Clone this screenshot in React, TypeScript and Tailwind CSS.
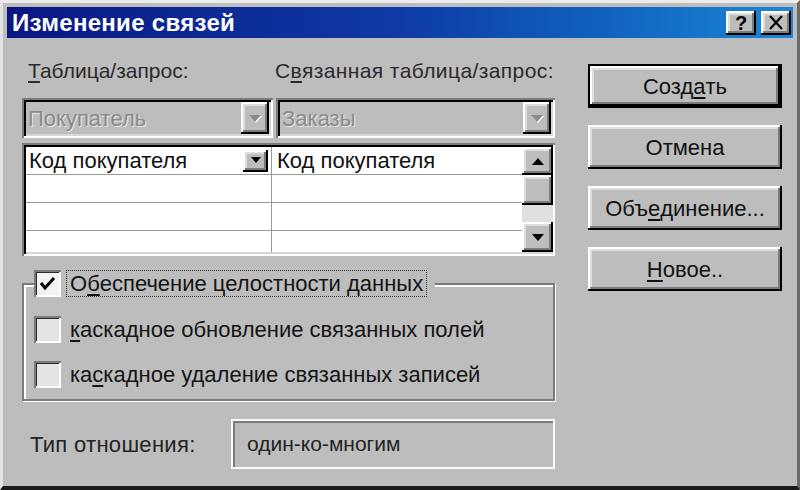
import React from "react";

const raised =
  "shadow-[inset_-2px_-2px_0_#000,inset_2px_2px_0_#fff,inset_-4px_-4px_0_#7b7b7b,inset_4px_4px_0_#dedede]";
const sunken =
  "shadow-[inset_2px_2px_0_#7b7b7b,inset_-2px_-2px_0_#fff,inset_4px_4px_0_#000,inset_-4px_-4px_0_#d6d6d6]";

function U({ children }: { children: React.ReactNode }) {
  return <span className="underline underline-offset-[3px] decoration-[1.5px]">{children}</span>;
}

function Arrow({ dir, disabled }: { dir: "up" | "down"; disabled?: boolean }) {
  const pts = dir === "up" ? "1,9 7,2 13,9" : "1,2 13,2 7,9";
  return (
    <svg width="14" height="11" viewBox="0 0 14 11">
      {disabled && (
        <polygon points={dir === "up" ? "2,10 8,3 14,10" : "2,3 14,3 8,10"} fill="#fff" />
      )}
      <polygon points={pts} fill={disabled ? "#8c8c8c" : "#000"} />
    </svg>
  );
}

function Combo({ text, width }: { text: string; width: string }) {
  return (
    <div className={`${width} h-[40px] bg-[#bdbdbd] ${sunken} flex items-center pl-[6px] pr-[4px]`}>
      <span className="flex-1 text-[22px] text-[#8a8a8a] [text-shadow:1px_1px_0_#e8e8e8]">
        {text}
      </span>
      <div className={`w-[28px] h-[32px] bg-[#bdbdbd] ${raised} flex items-center justify-center`}>
        <Arrow dir="down" disabled />
      </div>
    </div>
  );
}

function CheckBox({ checked }: { checked?: boolean }) {
  return (
    <div
      className={`w-[27px] h-[27px] ${checked ? "bg-[#f2f2f2]" : "bg-[#e4e4e4]"} shadow-[inset_2px_2px_0_#7b7b7b,inset_-2px_-2px_0_#fff,inset_3px_3px_0_#2a2a2a] flex items-center justify-center`}
    >
      {checked && (
        <svg width="17" height="15" viewBox="0 0 17 15">
          <polyline points="2,7 6,12 15,2" fill="none" stroke="#000" strokeWidth="3" />
        </svg>
      )}
    </div>
  );
}

function Btn({ children, def }: { children: React.ReactNode; def?: boolean }) {
  return (
    <div
      className={`w-[194px] h-[44px] bg-[#bdbdbd] flex items-center justify-center text-[22px] text-[#111] ${
        def ? "border-2 border-black" : ""
      } ${raised}`}
    >
      {children}
    </div>
  );
}

export default function App() {
  return (
    <div className="w-[800px] h-[490px] bg-[#bdbdbd] border-t-[3px] border-l-[3px] border-t-[#ececec] border-l-[#e2e2e2] border-r-[3px] border-r-[#6a6a6a] border-b-[4px] border-b-[#1a1a1a] p-[4px] font-['Liberation_Sans',Arial,sans-serif] text-[#141414] overflow-hidden">
      {/* title bar */}
      <div className="h-[31px] bg-gradient-to-r from-[#0b1682] via-[#0f3aa6] to-[#1d86d4] flex items-center justify-between pl-[5px] pr-[2px]">
        <span className="text-white font-bold text-[24px] tracking-[0.3px]">Изменение связей</span>
        <div className="flex gap-[5px]">
          <div className={`w-[30px] h-[24px] bg-[#bdbdbd] ${raised} flex items-center justify-center text-[20px] font-bold text-black leading-none`}>
            ?
          </div>
          <div className={`w-[30px] h-[24px] bg-[#bdbdbd] ${raised} flex items-center justify-center`}>
            <svg width="16" height="15" viewBox="0 0 16 15">
              <path d="M2 1 L14 14 M14 1 L2 14" stroke="#000" strokeWidth="2.2" />
            </svg>
          </div>
        </div>
      </div>

      <div className="flex pl-[15px]">
        {/* left column */}
        <div className="w-[533px] flex flex-col">
          <div className="mt-[21px] h-[24px] flex items-center text-[21px] text-[#2a2a2a]">
            <span className="w-[253px] pl-[6px]">
              <U>Т</U>аблица/запрос:
            </span>
            <span className="tracking-[0.4px]">
              С<U>в</U>язанная таблица/запрос:
            </span>
          </div>

          <div className="mt-[15px] flex gap-[3px]">
            <Combo text="Покупатель" width="w-[251px]" />
            <Combo text="Заказы" width="w-[279px]" />
          </div>

          <div className={`mt-[5px] h-[113px] bg-white ${sunken} p-[4px] pr-[2px] flex`}>
            <div className="flex-1 flex flex-col">
              {[0, 1, 2, 3].map((i) => (
                <div
                  key={i}
                  className={`flex ${i < 3 ? "h-[28px] border-b border-[#9a9a9a]" : "flex-1"}`}
                >
                  <div className="w-[246px] border-r border-[#9a9a9a] flex items-center pl-[3px] pr-[3px]">
                    {i === 0 && (
                      <>
                        <span className="flex-1 text-[22px] text-[#111]">Код покупателя</span>
                        <div className={`w-[25px] h-[22px] bg-[#bdbdbd] ${raised} flex items-center justify-center`}>
                          <svg width="10" height="7" viewBox="0 0 10 7">
                            <polygon points="0,0 10,0 5,6" fill="#000" />
                          </svg>
                        </div>
                      </>
                    )}
                  </div>
                  <div className="flex-1 flex items-center pl-[5px]">
                    {i === 0 && <span className="text-[22px] text-[#111]">Код покупателя</span>}
                  </div>
                </div>
              ))}
            </div>
            <div className="w-[31px] flex flex-col">
              <div className={`h-[28px] bg-[#bdbdbd] ${raised} flex items-center justify-center`}>
                <Arrow dir="up" />
              </div>
              <div className={`h-[30px] bg-[#bdbdbd] ${raised}`} />
              <div className="flex-1 bg-[#e0e0e0]" />
              <div className={`h-[30px] bg-[#bdbdbd] ${raised} flex items-center justify-center`}>
                <Arrow dir="down" />
              </div>
            </div>
          </div>

          <fieldset className="mt-[14px] h-[131px] border-2 border-[#7b7b7b] shadow-[inset_2px_2px_0_#fff,1px_1px_0_#fff]">
            <legend className="ml-[10px] pr-[8px] bg-[#bdbdbd] flex items-center h-[27px]">
              <CheckBox checked />
              <span className="ml-[5px] px-[3px] h-[27px] flex items-center border border-dotted border-[#333] text-[22px]">
                О<U>б</U>еспечение целостности данных
              </span>
            </legend>
            <div className="flex flex-col pl-[10px] pt-[19px] gap-[18px]">
              <div className="flex items-center h-[27px]">
                <CheckBox />
                <span className="ml-[9px] text-[22px]">
                  <U>к</U>аскадное обновление связанных полей
                </span>
              </div>
              <div className="flex items-center h-[27px]">
                <CheckBox />
                <span className="ml-[9px] text-[22px]">
                  ка<U>с</U>кадное удаление связанных записей
                </span>
              </div>
            </div>
          </fieldset>

          <div className="mt-[18px] h-[50px] flex items-center">
            <span className="w-[209px] pl-[8px] text-[22px] text-[#222] tracking-[0.3px]">Тип отношения:</span>
            <div className="flex-1 h-[50px] border-2 border-[#fafafa] shadow-[inset_2px_2px_0_#7b7b7b] flex items-center pl-[14px] text-[21px] text-[#222]">
              один-ко-многим
            </div>
          </div>
        </div>

        {/* right column */}
        <div className="ml-[33px] mt-[26px] flex flex-col gap-[17px]">
          <Btn def>
            Созд<U>а</U>ть
          </Btn>
          <Btn>Отмена</Btn>
          <Btn>
            Объ<U>е</U>динение...
          </Btn>
          <Btn>
            <U>Н</U>овое..
          </Btn>
        </div>
      </div>
    </div>
  );
}
